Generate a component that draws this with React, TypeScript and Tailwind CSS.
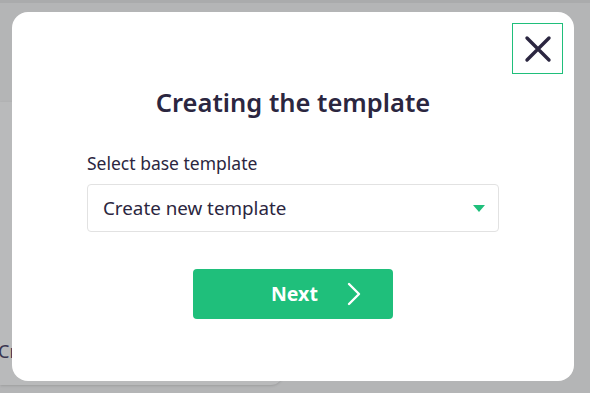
export default function App() {
  return (
    <div
      className="relative h-[393px] w-[590px] overflow-hidden bg-[#b4b5b6]"
      style={{ fontFamily: '"Noto Sans", "Open Sans", sans-serif' }}
    >
      {/* page behind the overlay */}
      <div className="h-[3px] w-full bg-[#aaabac]" />
      <div className="absolute left-0 top-[102px] h-[283px] w-[283px] rounded-br-xl bg-[#b9babb] shadow">
        <span className="absolute left-[-2px] top-[236px] text-[18px] text-[#3a3550]">Cr</span>
      </div>

      {/* modal */}
      <div className="absolute left-[12px] top-[12px] flex h-[369px] w-[562px] flex-col items-center rounded-2xl bg-white text-[#2b2640]">
        <button className="absolute right-[11px] top-[11px] flex h-[51px] w-[51px] items-center justify-center border border-[#1fbf7b]">
          <svg width="28" height="28" viewBox="0 0 28 28">
            <path d="M3 3 L25 25 M25 3 L3 25" stroke="#2b2640" strokeWidth="3.4" strokeLinecap="round" />
          </svg>
        </button>

        <h2 className="mt-[74px] text-[25.5px] font-semibold leading-[32px]">Creating the template</h2>

        <div className="mt-[33px] w-[412px]">
          <label className="block text-[17.5px] leading-[24px]">Select base template</label>
          <div className="mt-[9px] flex h-[48px] items-center justify-between rounded border border-[#e2e2e2] pl-[15px] pr-[13px]">
            <span className="text-[18.8px]">Create new template</span>
            <svg width="12" height="7" viewBox="0 0 12 7">
              <path d="M0 0 L12 0 L6 7 Z" fill="#1fbf7b" />
            </svg>
          </div>
        </div>

        <button className="mt-[37px] flex h-[50px] w-[200px] items-center justify-start rounded bg-[#1fbf7b] pl-[78px] text-white">
          <span className="text-[19.5px] font-bold">Next</span>
          <svg width="14" height="24" viewBox="0 0 14 24" className="ml-[29px]">
            <path d="M2 2 L12 12 L2 22" fill="none" stroke="white" strokeWidth="2.4" strokeLinecap="round" strokeLinejoin="round" />
          </svg>
        </button>
      </div>
    </div>
  );
}
